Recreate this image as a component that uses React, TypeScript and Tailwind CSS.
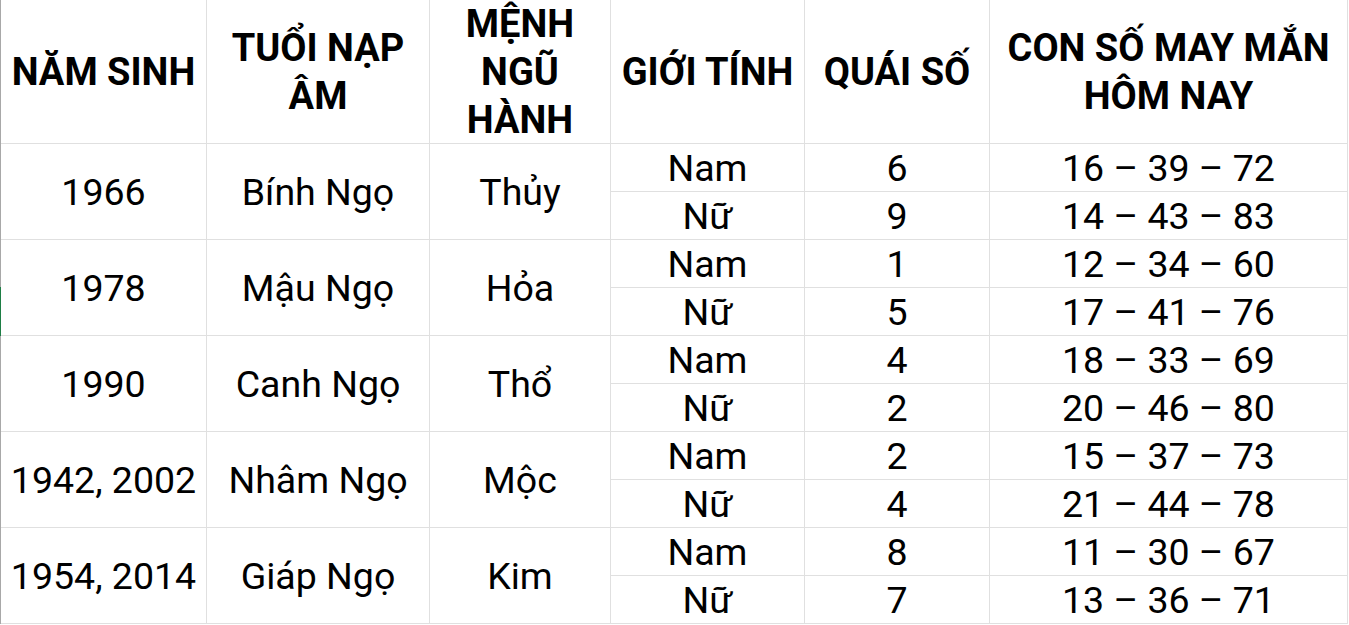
import { Fragment } from "react";

const rows = [
  {
    year: "1966",
    tuoi: "Bính Ngọ",
    menh: "Thủy",
    nam: { so: "6", lucky: "16 – 39 – 72" },
    nu: { so: "9", lucky: "14 – 43 – 83" },
  },
  {
    year: "1978",
    tuoi: "Mậu Ngọ",
    menh: "Hỏa",
    nam: { so: "1", lucky: "12 – 34 – 60" },
    nu: { so: "5", lucky: "17 – 41 – 76" },
  },
  {
    year: "1990",
    tuoi: "Canh Ngọ",
    menh: "Thổ",
    nam: { so: "4", lucky: "18 – 33 – 69" },
    nu: { so: "2", lucky: "20 – 46 – 80" },
  },
  {
    year: "1942, 2002",
    tuoi: "Nhâm Ngọ",
    menh: "Mộc",
    nam: { so: "2", lucky: "15 – 37 – 73" },
    nu: { so: "4", lucky: "21 – 44 – 78" },
  },
  {
    year: "1954, 2014",
    tuoi: "Giáp Ngọ",
    menh: "Kim",
    nam: { so: "8", lucky: "11 – 30 – 67" },
    nu: { so: "7", lucky: "13 – 36 – 71" },
  },
];

const cell = "flex items-center justify-center bg-white text-center";
const head = `${cell} font-bold text-[38px]`;

export default function App() {
  return (
    <div
      className="flex min-h-screen bg-white text-black"
      style={{ fontFamily: "Roboto, 'Noto Sans', sans-serif" }}
    >
      {/* left frame edge with the selected-row marker */}
      <div className="flex w-px flex-col">
        <div className="h-[287px] bg-[#a8a8a8]" />
        <div className="h-[49px] bg-[#1e7e45]" />
        <div className="h-[288px] bg-[#a8a8a8]" />
      </div>

      <div className="self-start border-r border-b border-[#e0e0e0] bg-[#e0e0e0]">
        <div className="grid grid-cols-[205px_222px_180px_193px_184px_357px] grid-rows-[143px_repeat(10,47px)] gap-px text-[37.5px] leading-[48px]">
          <div className={head}>NĂM SINH</div>
          <div className={head}>
            TUỔI NẠP
            <br />
            ÂM
          </div>
          <div className={head}>
            MỆNH
            <br />
            NGŨ
            <br />
            HÀNH
          </div>
          <div className={head}>GIỚI TÍNH</div>
          <div className={head}>QUÁI SỐ</div>
          <div className={head}>
            CON SỐ MAY MẮN
            <br />
            HÔM NAY
          </div>

          {rows.map((r) => (
            <Fragment key={r.year}>
              <div className={`${cell} row-span-2`}>{r.year}</div>
              <div className={`${cell} row-span-2`}>{r.tuoi}</div>
              <div className={`${cell} row-span-2`}>{r.menh}</div>
              <div className={cell}>Nam</div>
              <div className={cell}>{r.nam.so}</div>
              <div className={cell}>{r.nam.lucky}</div>
              <div className={cell}>Nữ</div>
              <div className={cell}>{r.nu.so}</div>
              <div className={cell}>{r.nu.lucky}</div>
            </Fragment>
          ))}
        </div>
      </div>
    </div>
  );
}
